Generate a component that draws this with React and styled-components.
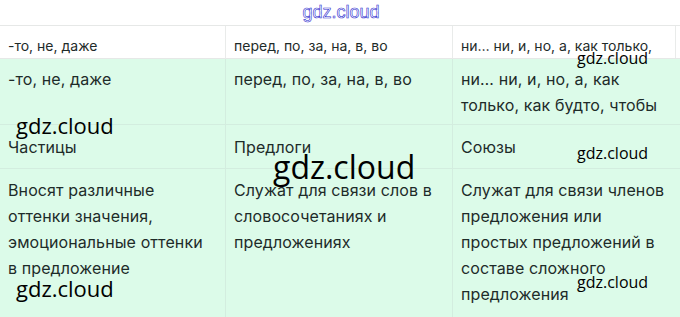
import React from "react";
import styled, { createGlobalStyle } from "styled-components";

const Global = createGlobalStyle`
  html, body { margin: 0; padding: 0; background: #ffffff; }
  body { width: 680px; height: 317px; overflow: hidden; }
`;

const rows = [
  {
    head: true,
    cells: ["-то, не, даже", "перед, по, за, на, в, во", "ни… ни, и, но, а, как только,"],
  },
  {
    pad: "7px 12px 6px 8px",
    cells: ["-то, не, даже", "перед, по, за, на, в, во", "ни… ни, и, но, а, как только, как будто, чтобы"],
  },
  {
    pad: "9px 12px 8px 8px",
    cells: ["Частицы", "Предлоги", "Союзы"],
  },
  {
    pad: "8px 12px 14px 8px",
    cells: [
      "Вносят различные оттенки значения, эмоциональные оттенки в предложение",
      "Служат для связи слов в словосочетаниях и предложениях",
      "Служат для связи членов предложения или простых предложений в составе сложного предложения",
    ],
  },
];

const marks = [
  { x: 16, y: 114, size: 22 },
  { x: 273, y: 151, size: 32 },
  { x: 577, y: 50, size: 16 },
  { x: 577, y: 145, size: 16 },
  { x: 16, y: 277, size: 22 },
  { x: 577, y: 274, size: 16 },
];

const Page = styled.div`
  position: relative;
  width: 680px;
  height: 317px;
  overflow: hidden;
  background: #dcfbe9;
`;

const Banner = styled.div`
  height: 25px;
  display: flex;
  justify-content: center;
  align-items: center;
  padding-left: 2px;
  background: #ffffff;
  border-bottom: 1px solid #e6e8e7;
  font-family: "Liberation Sans", Arial, sans-serif;
  font-size: 18px;
  color: #ffffff;
  -webkit-text-stroke: 0.6px #2f2fd0;
`;

const Table = styled.div`
  display: grid;
  grid-template-columns: 226px 227px 227px;
  width: 680px;
`;

const Cell = styled.div`
  background: ${(p) => (p.$head ? "#ffffff" : "#dcfbe9")};
  border-right: 1px solid ${(p) => (p.$head ? "#e9ebea" : "#d3eddf")};
  border-bottom: 1px solid ${(p) => (p.$head ? "#e6e8e7" : "#d3eddf")};
  padding: ${(p) => (p.$head ? "11px 8px 3px" : p.$pad)};
  font-family: Inter, "Noto Sans", sans-serif;
  font-size: ${(p) => (p.$head ? "14px" : "16px")};
  letter-spacing: ${(p) => (p.$head ? "0" : "0.1px")};
  line-height: ${(p) => (p.$head ? "18px" : "26px")};
  color: #1e2b29;
  white-space: ${(p) => (p.$head ? "nowrap" : "normal")};

  &:nth-child(3n) {
    border-right: none;
    box-shadow: ${(p) =>
      p.$head ? "inset -4px 0 0 #ffffff, inset -5px 0 0 #e9ebea" : "none"};
  }
`;

const Mark = styled.div`
  position: absolute;
  font-family: "Open Sans", sans-serif;
  line-height: 1;
  color: #000000;
  white-space: nowrap;
`;

export default function App() {
  return (
    <Page>
      <Global />
      <Banner>gdz.cloud</Banner>
      <Table>
        {rows.map((r, i) =>
          r.cells.map((c, j) => (
            <Cell key={`${i}-${j}`} $head={r.head} $pad={r.pad}>
              {c}
            </Cell>
          ))
        )}
      </Table>
      {marks.map((m, i) => (
        <Mark key={i} style={{ left: m.x, top: m.y, fontSize: m.size }}>
          gdz.cloud
        </Mark>
      ))}
    </Page>
  );
}
